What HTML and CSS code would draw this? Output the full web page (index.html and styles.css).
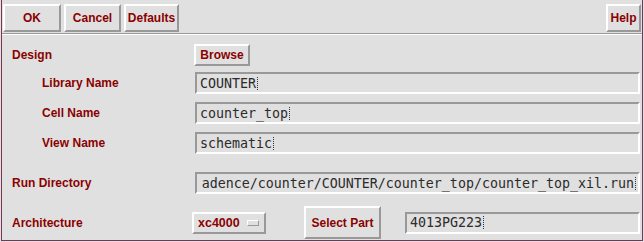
FILE: index.html
```html
<!DOCTYPE html>
<html lang="en">
<head>
    <meta charset="UTF-8">
    <title>Xilinx Options</title>
    <link rel="stylesheet" href="styles.css">
</head>
<body>
    <div class="frame">
        <!-- barre des boutons -->
        <div class="bar">
            <button class="btn btn-ok">OK</button>
            <button class="btn btn-cancel">Cancel</button>
            <button class="btn btn-defaults">Defaults</button>
            <span class="spacer"></span>
            <button class="btn btn-help">Help</button>
        </div>
        <div class="sep"></div>

        <div class="form">
            <div class="row row-design">
                <span class="label">Design</span>
                <button class="btn btn-browse">Browse</button>
            </div>
            <div class="row row-lib">
                <span class="label sub">Library Name</span>
                <div class="field"><span class="value">COUNTER</span><i class="caret"></i></div>
            </div>
            <div class="row row-cell">
                <span class="label sub">Cell Name</span>
                <div class="field"><span class="value">counter_top</span><i class="caret"></i></div>
            </div>
            <div class="row row-view">
                <span class="label sub">View Name</span>
                <div class="field"><span class="value">schematic</span><i class="caret"></i></div>
            </div>
            <div class="row row-run">
                <span class="label">Run Directory</span>
                <div class="field field-scroll"><span class="value">adence/counter/COUNTER/counter_top/counter_top_xil.run</span><i class="caret"></i></div>
            </div>
            <div class="row row-arch">
                <span class="label">Architecture</span>
                <button class="btn option">xc4000<i class="indicator"></i></button>
                <button class="btn btn-part">Select Part</button>
                <div class="field field-part"><span class="value">4013PG223</span><i class="caret"></i></div>
            </div>
        </div>
    </div>
</body>
</html>
```

FILE: styles.css
```css
:root {
    --bg: #e0e0e0;
    --frame: #7b3454;
    --text-red: #8b0000;
    --shadow: #999999;
    --light: #ffffff;
}

body {
    margin: 0;
    background: var(--bg);
    font-family: "Liberation Sans", Arial, sans-serif;
}

.frame {
    width: 640px;
    height: 240px;
    margin-left: 1px;
    border-left: 1px solid var(--frame);
    border-right: 1px solid var(--frame);
    border-bottom: 1px solid var(--frame);
}

.bar {
    display: flex;
    gap: 3px;
    padding: 4px 1px 0 1px;
    height: 28px;
}

.spacer {
    flex: 1;
}

.btn {
    box-sizing: border-box;
    margin: 0;
    padding: 0;
    background: var(--bg);
    border: 2px solid;
    border-color: var(--light) var(--shadow) var(--shadow) var(--light);
    color: var(--text-red);
    font-family: "Liberation Sans", Arial, sans-serif;
    font-weight: bold;
    font-size: 12px;
    cursor: pointer;
}

.btn-ok { width: 58px; }
.btn-cancel { width: 57px; }
.btn-defaults { width: 55px; }
.btn-help { width: 35px; }

.sep {
    margin-top: 1px;
    height: 1px;
    background: var(--shadow);
    border-bottom: 1px solid var(--light);
}

.form {
    padding-right: 2px;
}

.row {
    display: flex;
    align-items: center;
    height: 22px;
}

.row-design { margin-top: 9px; }
.row-lib { margin-top: 6px; }
.row-cell { margin-top: 8px; }
.row-view { margin-top: 8px; }
.row-run { margin-top: 18px; }
.row-arch { margin-top: 12px; height: 33px; }

.label {
    width: 183px;
    flex: none;
    padding-left: 10px;
    color: var(--text-red);
    font-weight: bold;
    font-size: 12px;
}

.label.sub {
    width: 153px;
    padding-left: 40px;
}

.btn-browse {
    width: 56px;
    height: 22px;
    margin-left: -1px;
}

.field {
    box-sizing: border-box;
    flex: 1;
    min-width: 0;
    height: 22px;
    display: flex;
    align-items: center;
    padding: 0 3px;
    overflow: hidden;
    border: 2px solid;
    border-color: var(--shadow) var(--light) var(--light) var(--shadow);
    font-family: "DejaVu Sans Mono", "Liberation Mono", monospace;
    font-size: 13.3px;
    color: #2b2b2b;
    white-space: nowrap;
}

.field-scroll {
    justify-content: flex-end;
    padding-right: 2px;
}

.value {
    flex: none;
}

.caret {
    flex: none;
    width: 1px;
    height: 13px;
    margin-left: 1px;
    background: repeating-linear-gradient(to bottom, #333 0 1px, transparent 1px 2px);
}

.option {
    display: flex;
    align-items: center;
    width: 74px;
    height: 22px;
    margin-left: -3px;
    padding-left: 4px;
    font-size: 12.5px;
}

.indicator {
    box-sizing: border-box;
    width: 12px;
    height: 6px;
    margin-left: 7px;
    border: 1px solid;
    border-color: var(--light) var(--shadow) var(--shadow) var(--light);
}

.btn-part {
    width: 77px;
    height: 33px;
    margin-left: 38px;
}

.field-part {
    margin-left: 24px;
}
```
